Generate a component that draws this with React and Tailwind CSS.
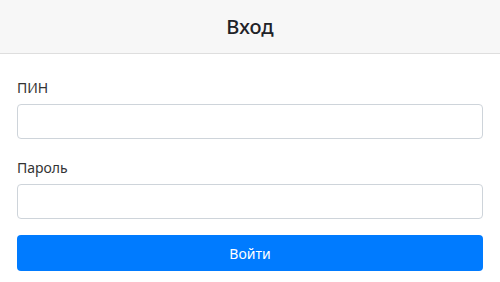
export default function App() {
  const font = { fontFamily: '"Noto Sans", "Open Sans", sans-serif' };
  return (
    <div className="w-[500px] h-[282px] bg-white text-[#212529]" style={font}>
      <div className="h-[54px] bg-[#f7f7f7] border-b border-[#dedede] flex items-center justify-center">
        <h1 className="text-[20px] leading-none font-medium text-[#1f2328]">Вход</h1>
      </div>
      <div className="px-[17px] pt-[23px]">
        <label className="block text-[14px] leading-[21px] text-[#333] mb-[6px]">ПИН</label>
        <input className="block w-full h-[35px] border border-[#ced4da] rounded-[4px] bg-white outline-none" />
        <label className="block text-[14px] leading-[21px] text-[#333] mt-[18px] mb-[6px]">Пароль</label>
        <input type="password" className="block w-full h-[35px] border border-[#ced4da] rounded-[4px] bg-white outline-none" />
        <button className="mt-[16px] w-full h-[36px] rounded-[4px] bg-[#007bff] text-white text-[14px] flex items-center justify-center">
          Войти
        </button>
      </div>
    </div>
  );
}
